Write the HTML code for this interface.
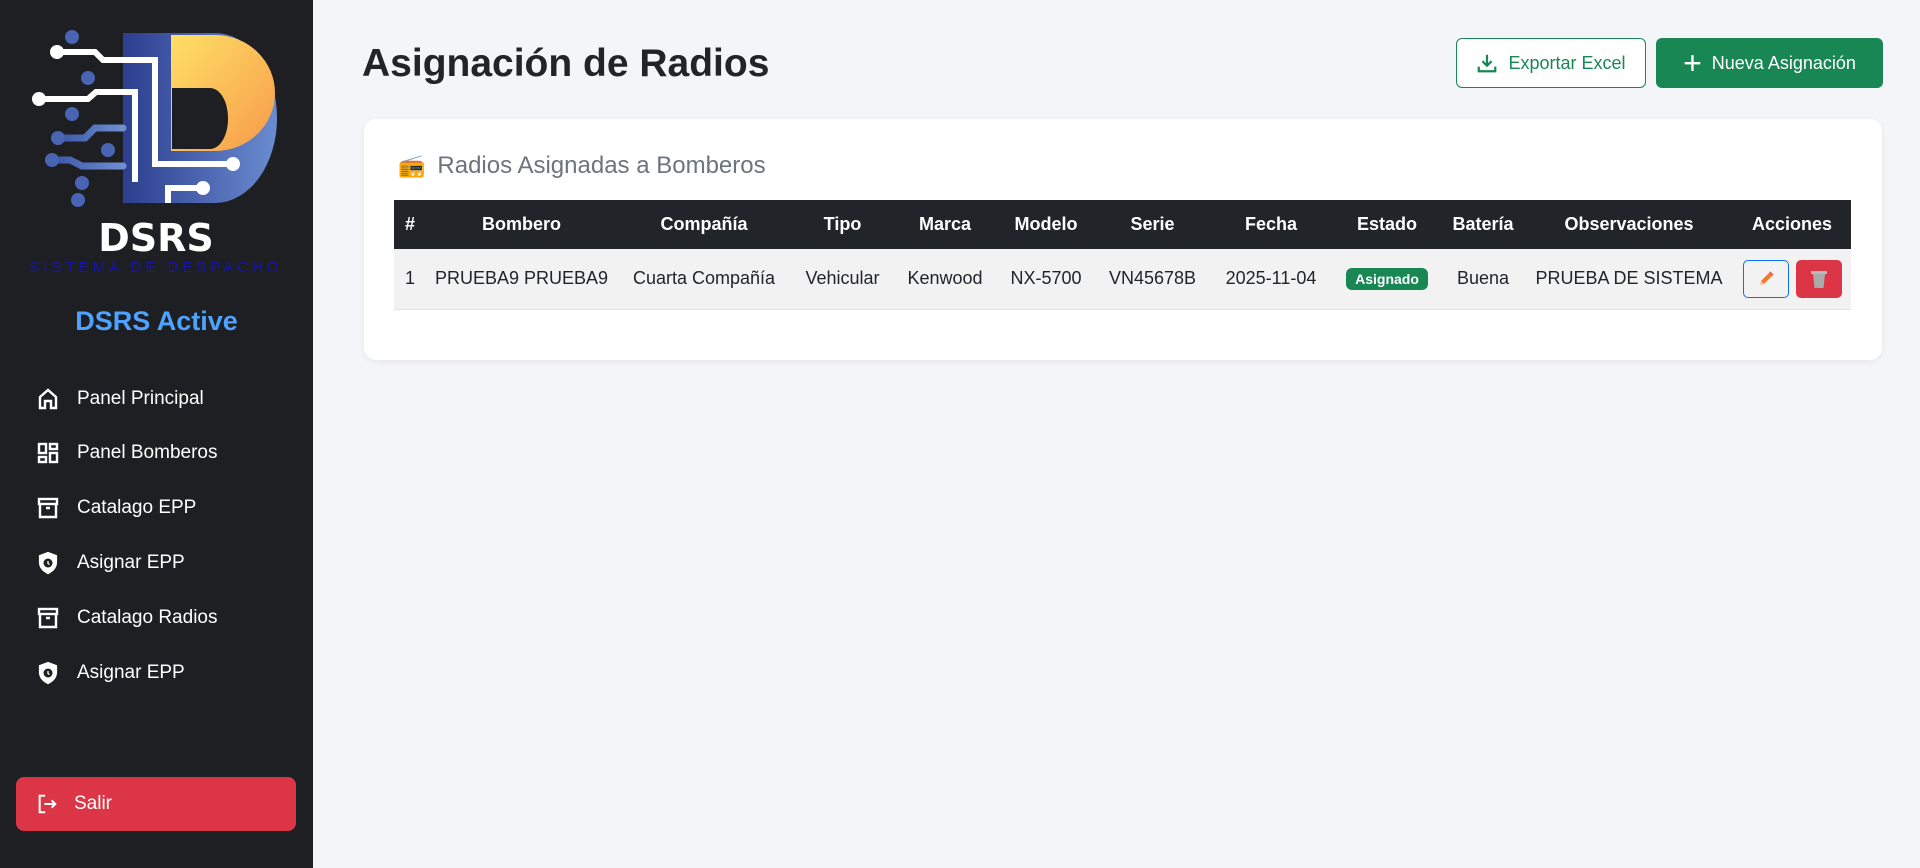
<!DOCTYPE html>
<html><head><meta charset="utf-8">
<style>
*{box-sizing:border-box;margin:0;padding:0}
body{width:1920px;height:868px;overflow:hidden;background:#f4f5f8;font-family:"Liberation Sans",sans-serif;position:relative}
.sb{position:absolute;left:0;top:0;width:313px;height:868px;background:#1e1f23}
.nav{position:absolute;left:36px;color:#fff;font-size:19px;display:flex;align-items:center}
.nav svg{width:24px;height:24px;margin-right:17px}
.salir{position:absolute;left:16px;top:777px;width:280px;height:54px;background:#dc3545;border-radius:8px;color:#fff;font-size:19px;display:flex;align-items:center;padding-left:20px}
.salir svg{margin-right:16px}
h1{position:absolute;left:362px;top:42px;font-size:39px;font-weight:bold;color:#212529}
.btn{position:absolute;top:38px;height:50px;border-radius:6px;display:flex;align-items:center;justify-content:center;font-size:18px}
.card{position:absolute;left:364px;top:119px;width:1518px;height:241px;background:#fff;border-radius:12px;box-shadow:0 2px 6px rgba(0,0,0,.06)}
.ct{position:absolute;left:34px;top:33px;font-size:24px;color:#6c757d;display:flex;align-items:center}
table{position:absolute;left:30px;top:81px;width:1457px;border-collapse:collapse;font-size:18px;color:#212529}
th{background:#212529;color:#fff;height:49px;font-weight:bold;text-align:center}
td{background:#f2f2f2;height:60px;text-align:center;border-bottom:1px solid #dee2e6;white-space:nowrap}
.badge{background:#198754;color:#fff;font-weight:bold;font-size:14px;padding:3px 9px;border-radius:6px}
</style></head><body>
<div class="sb">
<svg style="position:absolute;left:0;top:0" width="313" height="300" viewBox="0 0 313 300">
<defs><linearGradient id="y" x1="0" y1="0" x2="1" y2="1"><stop offset="0" stop-color="#ffe066"/><stop offset="1" stop-color="#f79a4a"/></linearGradient>
<linearGradient id="b" x1="0" y1="0" x2="1" y2="0"><stop offset="0" stop-color="#2c3e8f"/><stop offset="1" stop-color="#6a8cd0"/></linearGradient>
<linearGradient id="l" x1="0" y1="0" x2="1" y2="0"><stop offset="0" stop-color="#3a55a8"/><stop offset="1" stop-color="#6f8fd0"/></linearGradient></defs>
<path d="M123 33 H215 A62 85 0 0 1 277 118 A62 85 0 0 1 215 203 H123 Z" fill="url(#b)"/>
<path d="M171 35 H215 A60 58 0 0 1 275 93 A60 58 0 0 1 215 151 H171 Z" fill="url(#y)"/>
<path d="M172 88 H210 A18 30 0 0 1 228 118 A18 30 0 0 1 210 149 H172 Z" fill="#1e1f23"/>
<g stroke="url(#l)" stroke-width="7" fill="none" stroke-linecap="round">
<path d="M72 37 H123"/><path d="M88 78 H123"/><path d="M72 114 H123"/><path d="M58 138 H85 L95 128 H123"/><path d="M108 150 H123"/><path d="M52 160 H70 L82 166 H123"/><path d="M82 183 H123"/><path d="M78 200 H123"/>
</g>
<g fill="#4a64b4"><circle cx="72" cy="37" r="7"/><circle cx="88" cy="78" r="7"/><circle cx="72" cy="114" r="7"/><circle cx="58" cy="138" r="7"/><circle cx="108" cy="150" r="7"/><circle cx="52" cy="160" r="7"/><circle cx="82" cy="183" r="7"/><circle cx="78" cy="200" r="7"/></g>
<g stroke="#fff" stroke-width="6" fill="none"><path d="M57 52 H95 L103 60 H155 V164 H233"/><path d="M39 99 H88 L96 92 H135 V182"/><path d="M168 203 V188 H203"/></g>
<g fill="#fff"><circle cx="57" cy="52" r="7"/><circle cx="39" cy="99" r="7"/><circle cx="233" cy="164" r="7"/><circle cx="203" cy="188" r="7"/></g>
<text x="156" y="251" text-anchor="middle" font-family="DejaVu Sans" font-weight="bold" font-size="38" fill="#fff">DSRS</text>
<text x="156" y="272" text-anchor="middle" font-family="Liberation Sans" font-size="15" letter-spacing="4" fill="#1515a8">SISTEMA DE DESPACHO</text>
</svg>
<div style="position:absolute;left:0;width:313px;top:306px;text-align:center;color:#4da3ff;font-size:27px;font-weight:bold">DSRS Active</div>
<div class="nav" style="top:387px"><svg viewBox="0 0 24 24" fill="none" stroke="#fff" stroke-width="2.4"><path d="M4 21V10l8-7 8 7v11h-5v-7H9v7z"/></svg>Panel Principal</div>
<div class="nav" style="top:441px"><svg viewBox="0 0 24 24" fill="none" stroke="#fff" stroke-width="2.4"><rect x="3" y="3" width="7" height="9"/><rect x="14" y="3" width="7" height="5"/><rect x="14" y="12" width="7" height="9"/><rect x="3" y="16" width="7" height="5"/></svg>Panel Bomberos</div>
<div class="nav" style="top:496px"><svg viewBox="0 0 24 24" fill="none" stroke="#fff" stroke-width="2.4"><rect x="3" y="3" width="18" height="5"/><path d="M4 8v13h16V8M10 12h4"/></svg>Catalago EPP</div>
<div class="nav" style="top:551px"><svg viewBox="0 0 24 24" fill="none" stroke="#fff" stroke-width="2.2"><path d="M12 2l8 3v6c0 6-4 9-8 11-4-2-8-5-8-11V5z" fill="#fff"/><circle cx="12" cy="12" r="4.5" fill="#1e1f23" stroke="none"/><path d="M12 10v2.5l1.5 1" stroke-width="1.3"/></svg>Asignar EPP</div>
<div class="nav" style="top:606px"><svg viewBox="0 0 24 24" fill="none" stroke="#fff" stroke-width="2.4"><rect x="3" y="3" width="18" height="5"/><path d="M4 8v13h16V8M10 12h4"/></svg>Catalago Radios</div>
<div class="nav" style="top:661px"><svg viewBox="0 0 24 24" fill="none" stroke="#fff" stroke-width="2.2"><path d="M12 2l8 3v6c0 6-4 9-8 11-4-2-8-5-8-11V5z" fill="#fff"/><circle cx="12" cy="12" r="4.5" fill="#1e1f23" stroke="none"/><path d="M12 10v2.5l1.5 1" stroke-width="1.3"/></svg>Asignar EPP</div>
<div class="salir"><svg width="22" height="22" viewBox="0 0 24 24" fill="none" stroke="#fff" stroke-width="2.2"><path d="M10 3H4v18h6M9 12h12M17 8l4 4-4 4"/></svg>Salir</div>
</div>
<h1>Asignación de Radios</h1>
<div class="btn" style="left:1456px;width:190px;border:1px solid #198754;color:#198754;background:#fff"><svg width="22" height="22" viewBox="0 0 24 24" fill="none" stroke="#198754" stroke-width="2.4" style="margin-right:10px"><path d="M12 3v12M7 10l5 5 5-5M3 16v5h18v-5"/></svg>Exportar Excel</div>
<div class="btn" style="left:1656px;width:227px;background:#198754;color:#fff"><span style="font-size:32px;margin-right:10px;line-height:1">+</span>Nueva Asignación</div>
<div class="card">
<div class="ct"><span style="font-size:22px;margin-right:12px">📻</span>Radios Asignadas a Bomberos</div>
<table>
<colgroup><col style="width:32px"><col style="width:191px"><col style="width:174px"><col style="width:103px"><col style="width:102px"><col style="width:100px"><col style="width:113px"><col style="width:124px"><col style="width:108px"><col style="width:84px"><col style="width:208px"><col style="width:118px"></colgroup>
<tr><th>#</th><th>Bombero</th><th>Compañía</th><th>Tipo</th><th>Marca</th><th>Modelo</th><th>Serie</th><th>Fecha</th><th>Estado</th><th>Batería</th><th>Observaciones</th><th>Acciones</th></tr>
<tr><td>1</td><td>PRUEBA9 PRUEBA9</td><td>Cuarta Compañía</td><td>Vehicular</td><td>Kenwood</td><td>NX-5700</td><td>VN45678B</td><td>2025-11-04</td><td><span class="badge">Asignado</span></td><td>Buena</td><td>PRUEBA DE SISTEMA</td>
<td><span style="display:inline-flex;gap:7px;vertical-align:middle"><span style="width:46px;height:38px;border:1px solid #0d6efd;border-radius:5px;display:flex;align-items:center;justify-content:center"><svg width="20" height="20" viewBox="0 0 20 20"><path d="M4 16l1-4 9-9 3 3-9 9z" fill="#f47a30"/><path d="M13 4l3 3 1.5-1.5-3-3z" fill="#f25a5a"/><path d="M4 16l1-4 3 3z" fill="#f3c9a0"/></svg></span><span style="width:46px;height:38px;background:#dc3545;border-radius:5px;display:flex;align-items:center;justify-content:center"><svg width="18" height="20" viewBox="0 0 18 20"><rect x="1" y="2" width="16" height="3" fill="#bbb"/><path d="M3 5h12l-1.5 14h-9z" fill="#aaa"/></svg></span></span></td></tr>
</table>
</div>
</body></html>
